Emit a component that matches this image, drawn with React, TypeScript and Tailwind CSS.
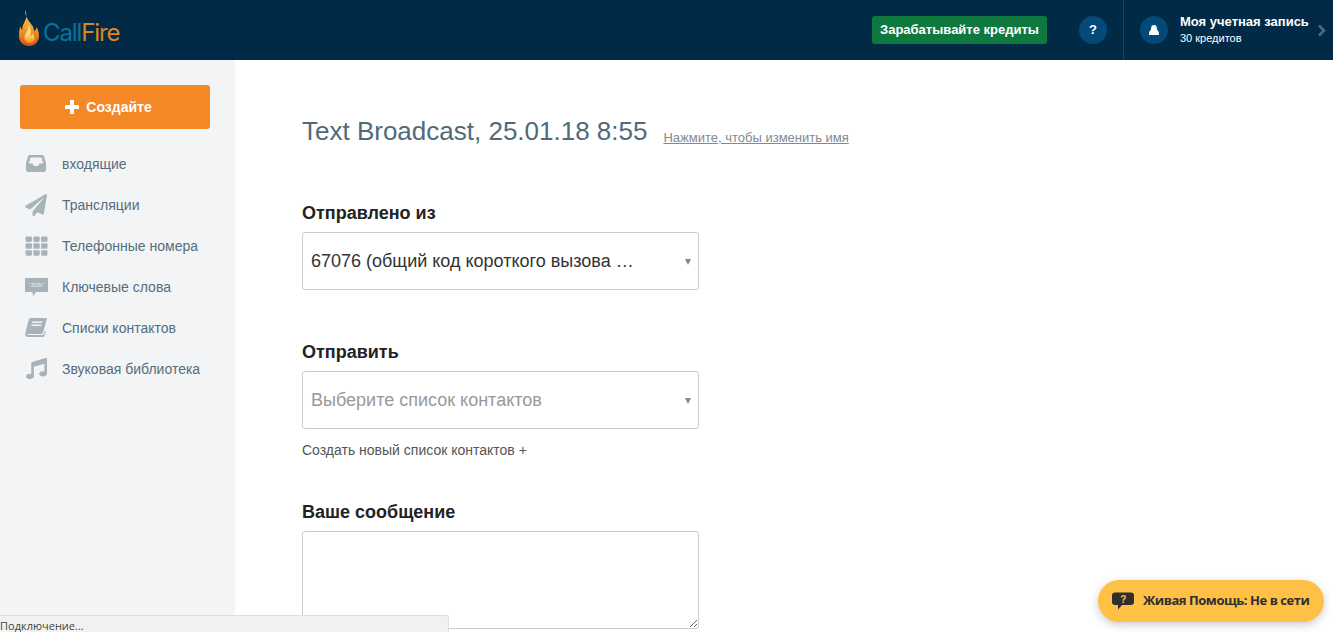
import { FaMusic, FaPaperPlane, FaTh } from 'react-icons/fa'
import type { ReactNode } from 'react'

function Logo() {
  return (
    <div className="flex items-center pl-[19px]">
      <svg width="20" height="36" viewBox="0 0 20 36" className="mt-[-4px]" aria-hidden="true">
        <defs>
          <linearGradient id="flame" x1="0" y1="0" x2="0" y2="1">
            <stop offset="0" stopColor="#f5c04a" />
            <stop offset="0.5" stopColor="#f5a02c" />
            <stop offset="1" stopColor="#d9501a" />
          </linearGradient>
          <linearGradient id="flameInner" x1="0" y1="0" x2="0" y2="1">
            <stop offset="0" stopColor="#fff3b0" />
            <stop offset="0.6" stopColor="#fbd35c" />
            <stop offset="1" stopColor="#f08a2a" />
          </linearGradient>
        </defs>
        <path
          d="M6 0C8.500 5 7 9 5.500 12 3.500 15.500 3 18 3.500 20 2 19 1.500 17.500 1.500 16 0 20 0 23 0 26 0 32 4.500 36 10 36 15.500 36 20 32 20 26 20 22.500 19 19.500 17.500 17 17.500 19 16.500 20.500 15 21 15 16.500 12 14 9.500 10.500 7.500 7.500 6 4 6 0Z"
          fill="url(#flame)"
        />
        <path
          d="M9.500 15C10.500 20 6 23 5.500 27 5.200 30.500 7.500 33 10.500 33 14 33 16 30.500 15.500 27.500 15.200 25.500 14 24 13 23.500 13 25 12.500 26 11.500 26.500 12.500 22 11.500 18 9.500 15Z"
          fill="url(#flameInner)"
        />
      </svg>
      <span className="ml-[4px] mt-[5px] font-['Inter',sans-serif] text-[24px] font-normal leading-none tracking-[-1.1px]">
        <span className="text-[#0b7299]">Call</span>
        <span className="text-[#df8420]">Fire</span>
      </span>
    </div>
  )
}

function InboxIcon() {
  return (
    <svg width="20" height="17" viewBox="0 0 20 17" fill="currentColor" aria-hidden="true">
      <path
        fillRule="evenodd"
        d="M4 0H16C17 0 17.500 .5 18 1.500L20 8.500V15C20 16.200 19.200 17 18 17H2C.8 17 0 16.200 0 15V8.500L2 1.500C2.500 .5 3 0 4 0ZM4.500 2.500 2.800 8.500H6.500L8 11H12L13.500 8.500H17.200L15.500 2.500Z"
      />
    </svg>
  )
}

function KeywordIcon() {
  return (
    <svg width="23" height="18" viewBox="0 0 23 18" aria-hidden="true">
      <path d="M0 0H23V14H11L8 18 7.500 14H0Z" fill="#a8b2b9" />
      <text x="11.500" y="8.500" textAnchor="middle" fontSize="5" fill="#f3f4f6" fontFamily="Liberation Sans, sans-serif">
        "JOIN"
      </text>
    </svg>
  )
}

function BookIcon() {
  return (
    <svg width="22" height="19" viewBox="0 0 22 19" fill="currentColor" aria-hidden="true">
      <path
        fillRule="evenodd"
        d="M6 0H21C21.800 0 22 .6 21.800 1.300L18 14.500C17.700 15.500 17 16 16 16H4C3 16 2.400 16.500 2.700 17H17.500C18.200 17 18.600 16.500 18.800 16L19.800 13H20.800L19.500 17.500C19.200 18.400 18.500 19 17.500 19H3C1 19 0 17.500 .2 15.500L3.500 2.500C3.800 1 4.700 0 6 0ZM7.500 3.500 7.100 5H17L17.500 3.500ZM6.700 6.500 6.300 8H16.100L16.600 6.500Z"
      />
    </svg>
  )
}

const navItems: { label: string; icon: ReactNode }[] = [
  { label: 'входящие', icon: <span className="pl-[2px]"><InboxIcon /></span> },
  { label: 'Трансляции', icon: <FaPaperPlane className="size-[22px] translate-x-[1px]" /> },
  { label: 'Телефонные номера', icon: <FaTh className="h-[22px] w-[23px] translate-x-[1px]" /> },
  { label: 'Ключевые слова', icon: <span className="pl-[1px]"><KeywordIcon /></span> },
  { label: 'Списки контактов', icon: <span className="pl-[1px]"><BookIcon /></span> },
  { label: 'Звуковая библиотека', icon: <FaMusic className="size-[21px] translate-x-[2px]" /> },
]

function Sidebar() {
  return (
    <aside className="w-[235px] shrink-0 bg-[#f3f4f6] px-5 pt-[25px]">
      <button
        type="button"
        className="flex h-11 w-[190px] items-center justify-center gap-[7px] rounded-[3px] bg-[#f48726] pr-[13px] text-sm font-bold text-white"
      >
        <svg width="14" height="14" viewBox="0 0 14 14" fill="currentColor" aria-hidden="true">
          <path d="M5 0H9V5H14V9H9V14H5V9H0V5H5Z" />
        </svg>
        Создайте
      </button>
      <nav className="mt-[14px]">
        {navItems.map((item) => (
          <div key={item.label} className="flex h-[41px] items-center text-sm text-[#566d7c]">
            <span className="flex w-[42px] shrink-0 justify-start pl-[4px] text-[#a8b2b9]">{item.icon}</span>
            {item.label}
          </div>
        ))}
      </nav>
    </aside>
  )
}

function SelectBox({ text, placeholder }: { text: string; placeholder?: boolean }) {
  return (
    <div className="flex h-[58px] w-[397px] items-center justify-between rounded-[3px] border border-[#cccccc] pl-[8px] pr-[7px]">
      <span className={placeholder ? 'text-[18px] text-[#999999]' : 'text-[18px] text-[#333333]'}>{text}</span>
      <span className="mt-[1px] h-0 w-0 border-x-[3.500px] border-t-[6px] border-x-transparent border-t-[#888888]" />
    </div>
  )
}

export default function App() {
  return (
    <div className="relative flex h-[632px] flex-col overflow-hidden bg-white font-['Liberation_Sans',Arial,sans-serif]">
      <header className="flex h-[60px] shrink-0 items-center justify-between bg-[#012a47]">
        <Logo />
        <div className="flex h-full items-center">
          <button
            type="button"
            className="flex h-7 w-[175px] items-center justify-center rounded-[3px] bg-[#0f783f] text-[13px] font-bold text-white"
          >
            Зарабатывайте кредиты
          </button>
          <span className="ml-[32px] flex size-7 items-center justify-center rounded-full bg-[#044a78] text-[13px] font-bold text-white">
            ?
          </span>
          <div className="ml-[16px] flex h-full w-[210px] items-center border-l border-[#1f435f] pl-4">
            <span className="flex size-7 items-center justify-center rounded-full bg-[#044a78] text-white">
              <svg width="10" height="10" viewBox="0 0 10 10" fill="currentColor" aria-hidden="true">
                <path d="M5 0C7 0 7.800 1.200 7.800 3 7.800 4 8 4.700 8.800 5.500 9.700 6.500 10 7.500 10 10H0C0 7.500 .3 6.500 1.200 5.500 2 4.700 2.200 4 2.200 3 2.200 1.200 3 0 5 0Z" />
              </svg>
            </span>
            <div className="ml-3 text-white">
              <p className="text-[13px] font-bold leading-[16px]">Моя учетная запись</p>
              <p className="text-[11px] leading-[16px]">30 кредитов</p>
            </div>
            <svg width="9" height="13" viewBox="0 0 9 13" className="ml-[8px] shrink-0 text-[#50677a]" aria-hidden="true">
              <path d="M2 1.500 7 6.500 2 11.500" fill="none" stroke="currentColor" strokeWidth="2.600" />
            </svg>
          </div>
        </div>
      </header>

      <div className="flex min-h-0 flex-1">
        <Sidebar />
        <main className="pl-[67px] pt-[56px]">
          <div className="flex items-end">
            <h1 className="text-[26px] leading-[30px] text-[#4f6a7a]">Text Broadcast, 25.01.18 8:55</h1>
            <a className="ml-[16px] text-[13px] leading-[16px] text-[#808a91] underline">Нажмите, чтобы изменить имя</a>
          </div>

          <label className="mt-[57px] block text-[18px] font-bold leading-[20px] text-[#222222]">Отправлено из</label>
          <div className="mt-[9px]">
            <SelectBox text="67076 (общий код короткого вызова …" />
          </div>

          <label className="mt-[52px] block text-[18px] font-bold leading-[20px] text-[#222222]">Отправить</label>
          <div className="mt-[9px]">
            <SelectBox text="Выберите список контактов" placeholder />
          </div>
          <p className="mt-[12px] text-sm leading-[18px] text-[#555555]">Создать новый список контактов +</p>

          <label className="mt-[43px] block text-[18px] font-bold leading-[20px] text-[#222222]">Ваше сообщение</label>
          <textarea className="mt-[9px] block h-[98px] w-[397px] rounded-[3px] border border-[#cccccc]" />
        </main>
      </div>

      <div className="absolute bottom-0 left-0 h-[17px] w-[449px] rounded-tr-[3px] border-r border-t border-[#dedede] bg-[#f1f1f1] font-['Open_Sans',sans-serif] text-[11px] leading-[20px] text-[#444444]">
        Подключение...
      </div>

      <button
        type="button"
        className="absolute bottom-[10px] right-[9px] flex h-[42px] w-[226px] items-center rounded-full bg-[#ffc145] pl-[14px] font-['Open_Sans',sans-serif] text-[13px] font-bold tracking-[-0.45px] text-[#2f2f2f] shadow-[0_3px_10px_rgba(0,0,0,0.2)]"
      >
        <svg width="22" height="18" viewBox="0 0 22 18" aria-hidden="true" className="mr-[9px] shrink-0">
          <path d="M3 0.500H19C20.500 0.500 22 1.500 22 3V10.500C22 12 20.500 13 19 13H10L6 17.500V13H3C1.500 13 0 12 0 10.500V3C0 1.500 1.500 0.500 3 0.500Z" fill="#2f2f2f" />
          <text x="11" y="10.500" textAnchor="middle" fontSize="10" fontWeight="bold" fill="#ffc145" fontFamily="Liberation Sans, sans-serif">
            ?
          </text>
        </svg>
        Живая Помощь: Не в сети
      </button>
    </div>
  )
}
